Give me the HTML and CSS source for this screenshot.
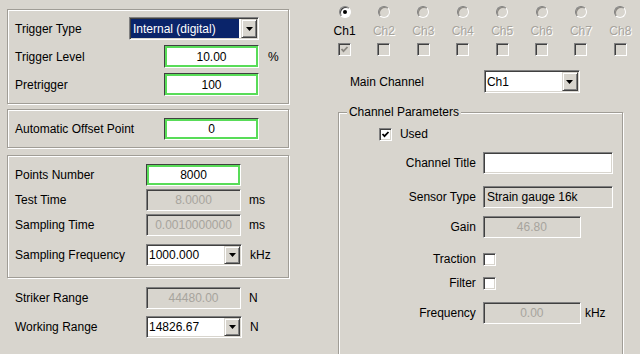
FILE: index.html
```html
<!DOCTYPE html>
<html lang="en">
<head>
    <meta charset="UTF-8">
    <meta name="viewport" content="width=device-width, initial-scale=1.0">
    <title>Acquisition Settings</title>
    <link rel="stylesheet" href="styles.css">
</head>
<body>

<div class="dialog">

    <div class="left">
        <div class="group g-trigger">
            <div class="row">
                <span class="lbl type">Trigger Type</span>
                <div class="combo focus type-box"><span class="combo-text">Internal (digital)</span><span class="combo-btn"><svg width="7" height="4" viewBox="0 0 7 4"><polygon points="0,0 7,0 3.5,4" fill="#000"/></svg></span></div>
            </div>
            <div class="row">
                <span class="lbl">Trigger Level</span>
                <span class="edit green">10.00</span>
                <span class="unit">%</span>
            </div>
            <div class="row">
                <span class="lbl">Pretrigger</span>
                <span class="edit green">100</span>
            </div>
        </div>

        <div class="group g-offset">
            <div class="row">
                <span class="lbl">Automatic Offset Point</span>
                <span class="edit green">0</span>
            </div>
        </div>

        <div class="group g-timing">
            <div class="row">
                <span class="lbl">Points Number</span>
                <span class="edit green">8000</span>
            </div>
            <div class="row">
                <span class="lbl">Test Time</span>
                <span class="edit dis">8.0000</span>
                <span class="unit">ms</span>
            </div>
            <div class="row">
                <span class="lbl">Sampling Time</span>
                <span class="edit dis">0.0010000000</span>
                <span class="unit">ms</span>
            </div>
            <div class="row spaced">
                <span class="lbl">Sampling Frequency</span>
                <div class="combo"><span class="combo-text">1000.000</span><span class="combo-btn"><svg width="7" height="4" viewBox="0 0 7 4"><polygon points="0,0 7,0 3.5,4" fill="#000"/></svg></span></div>
                <span class="unit">kHz</span>
            </div>
        </div>

        <div class="ranges">
            <div class="row">
                <span class="lbl">Striker Range</span>
                <span class="edit dis">44480.00</span>
                <span class="unit">N</span>
            </div>
            <div class="row">
                <span class="lbl">Working Range</span>
                <div class="combo"><span class="combo-text">14826.67</span><span class="combo-btn"><svg width="7" height="4" viewBox="0 0 7 4"><polygon points="0,0 7,0 3.5,4" fill="#000"/></svg></span></div>
                <span class="unit">N</span>
            </div>
        </div>
    </div>

    <div class="right">
        <div class="channels">
            <div class="ch"><span class="radio on"></span><span class="ch-name">Ch1</span><span class="check dis"><svg width="9" height="9" viewBox="0 0 9 9"><path d="M1.5 4 L3.5 6.2 L7.5 2" stroke="#8a8780" stroke-width="1.8" fill="none"/></svg></span></div>
            <div class="ch"><span class="radio dis"></span><span class="ch-name off">Ch2</span><span class="check dis"></span></div>
            <div class="ch"><span class="radio dis"></span><span class="ch-name off">Ch3</span><span class="check dis"></span></div>
            <div class="ch"><span class="radio dis"></span><span class="ch-name off">Ch4</span><span class="check dis"></span></div>
            <div class="ch"><span class="radio dis"></span><span class="ch-name off">Ch5</span><span class="check dis"></span></div>
            <div class="ch"><span class="radio dis"></span><span class="ch-name off">Ch6</span><span class="check dis"></span></div>
            <div class="ch"><span class="radio dis"></span><span class="ch-name off">Ch7</span><span class="check dis"></span></div>
            <div class="ch"><span class="radio dis"></span><span class="ch-name off">Ch8</span><span class="check dis"></span></div>
        </div>

        <div class="main-row">
            <span class="main-lbl">Main Channel</span>
            <div class="combo main-box"><span class="combo-text">Ch1</span><span class="combo-btn"><svg width="7" height="4" viewBox="0 0 7 4"><polygon points="0,0 7,0 3.5,4" fill="#000"/></svg></span></div>
        </div>

        <fieldset class="params">
            <legend>Channel Parameters</legend>
            <div class="used"><span class="check"><svg width="9" height="9" viewBox="0 0 9 9"><path d="M1.5 4 L3.5 6.2 L7.5 2" stroke="#000" stroke-width="1.8" fill="none"/></svg></span>Used</div>
            <div class="prow r-title"><span class="plbl">Channel Title</span><span class="edit long"></span></div>
            <div class="prow r-sensor"><span class="plbl">Sensor Type</span><span class="edit long ro">Strain gauge 16k</span></div>
            <div class="prow r-gain"><span class="plbl">Gain</span><span class="edit short dis">46.80</span></div>
            <div class="prow r-traction"><span class="plbl">Traction</span><span class="check"></span></div>
            <div class="prow r-filter"><span class="plbl">Filter</span><span class="check"></span></div>
            <div class="prow r-freq"><span class="plbl">Frequency</span><span class="edit short dis">0.00</span><span class="unit">kHz</span></div>
        </fieldset>
    </div>

</div>

</body>
</html>
```

FILE: styles.css
```css
html, body{
    margin: 0;
    height: 354px;
    overflow: hidden;
}
body{
    background-color: #d8d5ce;
    font-family: "Liberation Sans", Arial, sans-serif;
    font-size: 12px;
    color: #000;
}

.dialog{
    display: flex;
}

/* -----------------------------LEFT SIDE------------------------------ */
.left{
    width: 282px;
    margin-left: 7px;
    padding-top: 9px;
}

.group{
    border: 1px solid #a09d96;
    box-shadow: inset 1px 1px #fff, 1px 1px #fff;
    padding-left: 7px;
}
.g-trigger{
    padding-top: 7px;
    padding-bottom: 7px;
}
.g-trigger .row{
    height: 23px;
}
.g-trigger .row + .row{
    margin-top: 5px;
}
.g-offset{
    margin-top: 5px;
    padding-top: 8px;
    padding-bottom: 7px;
}
.g-timing{
    margin-top: 7px;
    padding-top: 8px;
    padding-bottom: 11px;
}
.g-timing .row + .row{
    margin-top: 3px;
}
.g-timing .row.spaced{
    margin-top: 8px;
}

.ranges{
    margin-top: 9px;
    padding-left: 8px;
}
.ranges .row + .row{
    margin-top: 7px;
}

.row{
    display: flex;
    align-items: center;
    height: 22px;
}
.lbl{
    width: 149px;
    white-space: nowrap;
}
.lbl.type{
    width: 114px;
}
.g-timing .lbl, .ranges .lbl{
    width: 131px;
}
.unit{
    margin-left: 9px;
}
.g-timing .unit, .ranges .unit{
    margin-left: 8px;
}

/* -----------------------------CONTROLS------------------------------ */
.edit{
    box-sizing: border-box;
    width: 95px;
    height: 100%;
    display: flex;
    align-items: center;
    justify-content: center;
    background-color: #fff;
    border: 1px solid;
    border-color: #808080 #fff #fff #808080;
    box-shadow: inset 1px 1px #404040, inset -1px -1px #d8d5ce;
    white-space: nowrap;
}
.edit.green{
    border-color: #404040 #fff #fff #404040;
    box-shadow: inset 0 0 0 2px #58dc58;
}
.edit.dis{
    background-color: #d8d5ce;
    color: #a7a49d;
}
.edit.ro{
    background-color: #d8d5ce;
    justify-content: flex-start;
    padding-left: 3px;
}
.edit.long{
    width: 130px;
}
.edit.short{
    width: 98px;
}

.combo{
    box-sizing: border-box;
    width: 96px;
    height: 100%;
    display: flex;
    padding: 1px;
    background-color: #fff;
    border: 1px solid;
    border-color: #808080 #fff #fff #808080;
    box-shadow: inset 1px 1px #404040, inset -1px -1px #d8d5ce;
}
.combo-text{
    flex: 1;
    display: flex;
    align-items: center;
    padding-left: 1px;
    white-space: nowrap;
    overflow: hidden;
}
.combo.focus .combo-text{
    background-color: #0a246a;
    color: #fff;
    margin-right: 2px;
    padding-left: 2px;
}
.combo-btn{
    box-sizing: border-box;
    width: 16px;
    display: flex;
    align-items: center;
    justify-content: center;
    background-color: #d8d5ce;
    border: 1px solid;
    border-color: #d8d5ce #404040 #404040 #d8d5ce;
    box-shadow: inset 1px 1px #fff, inset -1px -1px #808080;
}
.type-box{
    width: 130px;
}
.main-box{
    width: 96px;
}

.radio{
    box-sizing: border-box;
    display: block;
    width: 12px;
    height: 12px;
    border-radius: 50%;
    border: 1px solid;
    border-color: #808080 #fff #fff #808080;
    box-shadow: inset 1px 1px #404040;
    background-color: #fff;
    position: relative;
}
.radio.dis{
    background-color: #d8d5ce;
    box-shadow: inset 1px 1px #8a8780;
}
.radio.on::after{
    content: "";
    position: absolute;
    left: 3px;
    top: 3px;
    width: 4px;
    height: 4px;
    border-radius: 50%;
    background-color: #000;
}

.check{
    box-sizing: border-box;
    display: flex;
    align-items: center;
    justify-content: center;
    width: 13px;
    height: 13px;
    flex: none;
    background-color: #fff;
    border: 1px solid;
    border-color: #808080 #fff #fff #808080;
    box-shadow: inset 1px 1px #404040, inset -1px -1px #d8d5ce;
}
.check.dis{
    background-color: #d8d5ce;
}

/* -----------------------------RIGHT SIDE------------------------------ */
.right{
    margin-left: 31px;
    flex: 1;
}

.channels{
    display: grid;
    grid-template-columns: repeat(8, 39.4px);
    padding: 6px 0 0 5px;
}
.ch{
    display: flex;
    flex-direction: column;
    align-items: center;
}
.ch-name{
    line-height: 14px;
    margin-top: 6px;
}
.ch-name.off{
    color: #a7a49d;
    text-shadow: 1px 1px #fff;
}
.ch .check{
    margin-top: 5px;
}

.main-row{
    display: flex;
    align-items: center;
    height: 23px;
    margin-top: 14px;
    padding-left: 30px;
}
.main-lbl{
    width: 134px;
}

.params{
    box-sizing: border-box;
    width: 285px;
    height: 262px;
    min-width: 0;
    margin: 12px 0 0 18px;
    padding: 0;
    border: 1px solid #a09d96;
    box-shadow: inset 1px 1px #fff, 1px 1px #fff;
}
.params legend{
    margin-left: 8px;
    padding: 0 2px;
    line-height: 14px;
    background-color: #d8d5ce;
}

.used{
    display: flex;
    align-items: center;
    gap: 8px;
    height: 14px;
    margin: 8px 0 0 40px;
}

.prow{
    display: flex;
    align-items: center;
    height: 22px;
}
.plbl{
    width: 137px;
    margin-right: 7px;
    text-align: right;
    white-space: nowrap;
}
.prow .unit{
    margin-left: 4px;
}
.r-title{ margin-top: 11px; }
.r-sensor{ margin-top: 12px; }
.r-gain{ margin-top: 8px; }
.r-traction{ margin-top: 10px; }
.r-filter{ margin-top: 2px; }
.r-freq{ margin-top: 8px; }
```
